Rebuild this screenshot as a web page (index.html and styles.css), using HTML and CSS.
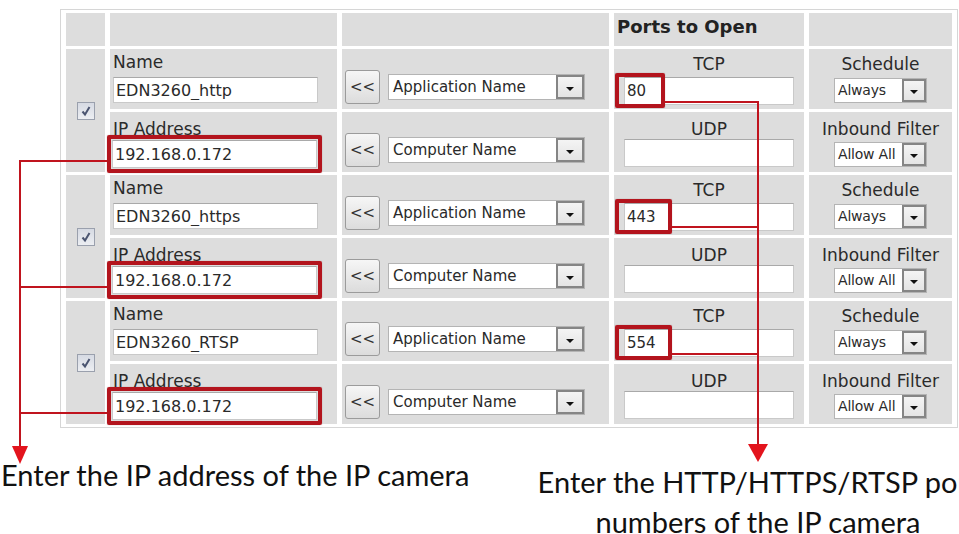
FILE: index.html
```html
<!DOCTYPE html>
<html lang="en">
<head>
  <meta charset="UTF-8" />
  <meta name="viewport" content="width=device-width, initial-scale=1.0" />
  <title>Port Forwarding Rules</title>
  <link rel="stylesheet" href="styles.css">
</head>
<body>

<div class="page">

  <!-- Port forwarding rules -->
  <table class="rules">
    <tr class="head">
      <td class="c-check"></td>
      <td class="c-name"></td>
      <td class="c-app"></td>
      <td class="c-port"><b>Ports to Open</b></td>
      <td class="c-sched"></td>
    </tr>

    <!-- Rule 1 -->
    <tr class="row-a">
      <td class="c-check" rowspan="2"><span class="check"><svg viewBox="0 0 16 16"><path d="M4.5 8.5 L7 11.5 L11.5 4"/></svg></span></td>
      <td class="c-name"><div class="label">Name</div><input class="text-input" type="text" value="EDN3260_http"></td>
      <td class="c-app"><div class="pick-row"><button class="pick">&lt;&lt;</button><span class="select app"><span class="value">Application Name</span><span class="arrow"></span></span></div></td>
      <td class="c-port"><div class="label">TCP</div><span class="port-field"><input class="port-input" type="text" value="80"><span class="mark"></span></span></td>
      <td class="c-sched"><div class="label">Schedule</div><span class="select small"><span class="value">Always</span><span class="arrow"></span></span></td>
    </tr>
    <tr class="row-b">
      <td class="c-name"><div class="label">IP Address</div><span class="ip-wrap"><input class="text-input" type="text" value="192.168.0.172"></span></td>
      <td class="c-app"><div class="pick-row"><button class="pick">&lt;&lt;</button><span class="select app"><span class="value">Computer Name</span><span class="arrow"></span></span></div></td>
      <td class="c-port"><div class="label">UDP</div><input class="port-input" type="text" value=""></td>
      <td class="c-sched"><div class="label">Inbound Filter</div><span class="select small"><span class="value">Allow All</span><span class="arrow"></span></span></td>
    </tr>

    <!-- Rule 2 -->
    <tr class="row-a">
      <td class="c-check" rowspan="2"><span class="check"><svg viewBox="0 0 16 16"><path d="M4.5 8.5 L7 11.5 L11.5 4"/></svg></span></td>
      <td class="c-name"><div class="label">Name</div><input class="text-input" type="text" value="EDN3260_https"></td>
      <td class="c-app"><div class="pick-row"><button class="pick">&lt;&lt;</button><span class="select app"><span class="value">Application Name</span><span class="arrow"></span></span></div></td>
      <td class="c-port"><div class="label">TCP</div><span class="port-field"><input class="port-input" type="text" value="443"><span class="mark wide"></span></span></td>
      <td class="c-sched"><div class="label">Schedule</div><span class="select small"><span class="value">Always</span><span class="arrow"></span></span></td>
    </tr>
    <tr class="row-b">
      <td class="c-name"><div class="label">IP Address</div><span class="ip-wrap"><input class="text-input" type="text" value="192.168.0.172"></span></td>
      <td class="c-app"><div class="pick-row"><button class="pick">&lt;&lt;</button><span class="select app"><span class="value">Computer Name</span><span class="arrow"></span></span></div></td>
      <td class="c-port"><div class="label">UDP</div><input class="port-input" type="text" value=""></td>
      <td class="c-sched"><div class="label">Inbound Filter</div><span class="select small"><span class="value">Allow All</span><span class="arrow"></span></span></td>
    </tr>

    <!-- Rule 3 -->
    <tr class="row-a">
      <td class="c-check" rowspan="2"><span class="check"><svg viewBox="0 0 16 16"><path d="M4.5 8.5 L7 11.5 L11.5 4"/></svg></span></td>
      <td class="c-name"><div class="label">Name</div><input class="text-input" type="text" value="EDN3260_RTSP"></td>
      <td class="c-app"><div class="pick-row"><button class="pick">&lt;&lt;</button><span class="select app"><span class="value">Application Name</span><span class="arrow"></span></span></div></td>
      <td class="c-port"><div class="label">TCP</div><span class="port-field"><input class="port-input" type="text" value="554"><span class="mark wide"></span></span></td>
      <td class="c-sched"><div class="label">Schedule</div><span class="select small"><span class="value">Always</span><span class="arrow"></span></span></td>
    </tr>
    <tr class="row-b">
      <td class="c-name"><div class="label">IP Address</div><span class="ip-wrap"><input class="text-input" type="text" value="192.168.0.172"></span></td>
      <td class="c-app"><div class="pick-row"><button class="pick">&lt;&lt;</button><span class="select app"><span class="value">Computer Name</span><span class="arrow"></span></span></div></td>
      <td class="c-port"><div class="label">UDP</div><input class="port-input" type="text" value=""></td>
      <td class="c-sched"><div class="label">Inbound Filter</div><span class="select small"><span class="value">Allow All</span><span class="arrow"></span></span></td>
    </tr>
  </table>

  <!-- Captions -->
  <div class="notes">
    <p class="note-left">Enter the IP address of the IP camera</p>
    <p class="note-right">Enter the HTTP/HTTPS/RTSP port<br>numbers of the IP camera</p>
  </div>

  <!-- Callout lines -->
  <svg class="callouts" width="959" height="534" viewBox="0 0 959 534">
    <path d="M107 152 H20 V438 M107 278 H20 M107 404 H20" />
    <path d="M665 93 H758 V436 M672 218 H758 M672 345 H758" />
    <polygon points="12,437 28,437 20,455" />
    <polygon points="748,435 768,435 758,453" />
  </svg>

</div>

</body>
</html>
```

FILE: styles.css
```css
html,
body {
  margin: 0;
  overflow: hidden;
}

body {
  font-family: "DejaVu Sans", Verdana, sans-serif;
  color: #2a2a2a;
  background: #fff;
}

.page {
  position: relative;
  width: 959px;
  height: 534px;
}

/* Rules table */
.rules {
  border-collapse: separate;
  border-spacing: 5px 3px;
  margin: 9px 0 0 60px;
  border: 1px solid #d6d6d6;
  table-layout: fixed;
}

.rules td {
  background: #dddddd;
  padding: 0;
  vertical-align: top;
}

.head {
  height: 33px;
}

.row-a,
.row-b {
  height: 60px;
}

.head .c-check { width: 39px; }
.head .c-name { width: 227px; }
.head .c-app { width: 264px; }
.head .c-sched { width: 143px; }

.rules .head .c-port {
  width: 187px;
  padding: 3px 0 0 3px;
  text-align: left;
}

.head b {
  font-size: 18px;
  line-height: 22px;
  color: #222;
}

.label {
  font-size: 17px;
  line-height: 20px;
}

/* checkbox column */
.rules .c-check {
  vertical-align: middle;
  text-align: center;
}

.check {
  display: inline-block;
  width: 18px;
  height: 18px;
  box-sizing: border-box;
  border: 1px solid #9aa0ad;
  background: linear-gradient(#d6dae3, #eceef2);
  vertical-align: middle;
}

.check svg {
  display: block;
  width: 16px;
  height: 16px;
}

.check path {
  fill: none;
  stroke: #4a5470;
  stroke-width: 2;
}

/* name / ip column */
.row-a .c-name {
  padding: 3px 0 0 3px;
}

.row-a .c-name .text-input {
  margin-top: 5px;
}

.row-b .c-name {
  padding: 9px 0 0 3px;
}

.row-b .c-name .label {
  line-height: 16px;
}

.text-input {
  display: block;
  width: 205px;
  height: 26px;
  box-sizing: border-box;
  border: 1px solid #c9c9c9;
  border-top-color: #a9a9a9;
  background: #fff;
  padding: 0 2px;
  font-family: "DejaVu Sans", Verdana, sans-serif;
  font-size: 16px;
  color: #2a2a2a;
}

.ip-wrap {
  display: inline-block;
  margin: -2px 0 -2px -6px;
  padding: 1px;
  border: 4px solid #b3141d;
  border-radius: 2px;
  box-shadow: 0 0 1px rgba(80, 0, 0, 0.5);
}

.ip-wrap .text-input {
  height: 28px;
}

/* application / computer column */
.rules .c-app {
  vertical-align: bottom;
  padding: 0 0 5px 3px;
}

.pick-row {
  display: flex;
  align-items: center;
  gap: 8px;
}

.pick {
  width: 35px;
  height: 34px;
  padding: 0;
  border: 1px solid #9b9b9b;
  border-radius: 3px;
  background: linear-gradient(#f6f6f6, #dcdcdc);
  font-family: "DejaVu Sans", Verdana, sans-serif;
  font-size: 15px;
  color: #333;
}

.select {
  display: inline-flex;
  align-items: stretch;
  box-sizing: border-box;
  background: #fff;
  border: 1px solid #b4b4b4;
  font-size: 15px;
  text-align: left;
  vertical-align: top;
}

.select .value {
  flex: 1;
  padding-left: 4px;
  white-space: nowrap;
  overflow: hidden;
}

.select .arrow {
  width: 24px;
  box-sizing: border-box;
  border: 2px solid #858585;
  background: linear-gradient(#f4f4f4, #e4e4e4);
  display: flex;
  align-items: center;
  justify-content: center;
}

.select .arrow::after {
  content: "";
  margin-top: 3px;
  border-left: 4px solid transparent;
  border-right: 4px solid transparent;
  border-top: 4px solid #111;
}

.select.app {
  width: 197px;
  height: 26px;
  line-height: 24px;
}

.select.app .arrow {
  width: 28px;
}

.select.small {
  width: 93px;
  height: 25px;
  line-height: 23px;
  font-size: 14px;
  letter-spacing: -0.2px;
}

.select.small .value {
  padding-left: 3px;
}

/* port column */
.rules .c-port {
  text-align: center;
}

.row-a .c-port {
  padding-top: 5px;
}

.row-a .c-port .port-field {
  margin-top: 3px;
}

.row-b .c-port {
  padding-top: 7px;
}

.port-field {
  position: relative;
  display: inline-block;
  vertical-align: top;
}

.port-input {
  display: inline-block;
  width: 170px;
  height: 28px;
  box-sizing: border-box;
  border: 1px solid #c9c9c9;
  border-top-color: #a9a9a9;
  background: #fff;
  padding: 0 2px;
  font-family: "DejaVu Sans", Verdana, sans-serif;
  font-size: 15px;
  color: #2a2a2a;
  vertical-align: top;
}

.mark {
  position: absolute;
  left: -9px;
  top: -4px;
  width: 50px;
  height: 35px;
  box-sizing: border-box;
  border: 4px solid #b3141d;
  border-radius: 2px;
  box-shadow: 0 0 1px rgba(80, 0, 0, 0.5);
}

.mark.wide {
  width: 57px;
}

/* schedule / filter column */
.rules .c-sched {
  text-align: center;
}

.row-a .c-sched {
  padding-top: 5px;
}

.row-a .c-sched .select {
  margin-top: 4px;
}

.row-b .c-sched {
  padding-top: 7px;
}

.row-b .c-sched .select {
  margin-top: 3px;
}

/* captions */
.notes {
  display: flex;
  margin-top: 27px;
  font-family: Lato, "Open Sans", sans-serif;
  font-size: 29px;
  line-height: 40px;
  color: #111;
}

.notes p {
  flex-shrink: 0;
  margin: 0;
  white-space: nowrap;
}

.note-left {
  width: 517px;
  padding-left: 1px;
}

.note-right {
  width: 480px;
  padding-top: 7px;
  text-align: center;
}

/* callout lines drawn over the page */
.callouts {
  position: absolute;
  left: 0;
  top: 0;
  pointer-events: none;
}

.callouts path {
  fill: none;
  stroke: #c0141e;
  stroke-width: 2;
}

.callouts polygon {
  fill: #e3141d;
}
```
